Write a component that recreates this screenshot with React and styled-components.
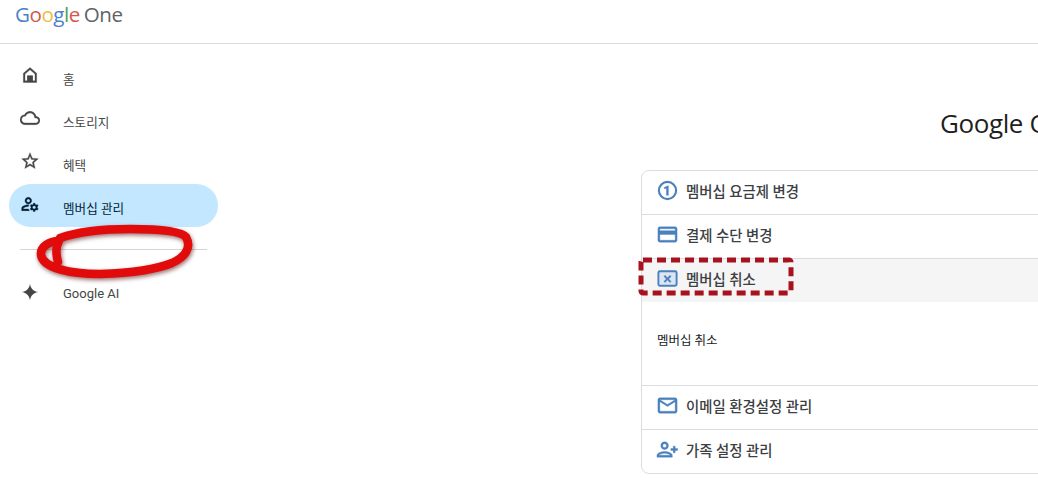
import styled, { createGlobalStyle } from "styled-components";

const GlobalStyle = createGlobalStyle`
  html, body {
    margin: 0;
    height: 100%;
    overflow: hidden;
    background: #fff;
  }
  body {
    font-family: Roboto, "Noto Sans CJK KR", sans-serif;
    color: #444746;
  }
`;

const Page = styled.div`
  width: 1038px;
  height: 487px;
  overflow: hidden;
`;

const Header = styled.header`
  height: 43px;
  border-bottom: 1px solid #dadce0;
  display: flex;
  align-items: flex-start;
  padding-left: 15px;
`;

const Logo = styled.div`
  display: flex;
  gap: 4px;
  font-family: "Open Sans", sans-serif;
  font-size: 20.6px;
  font-weight: 500;
  line-height: 29px;
  letter-spacing: -0.5px;
`;

const Letter = styled.span`
  color: ${(p) => p.$color};
`;

const Content = styled.div`
  display: flex;
`;

const Sidebar = styled.nav`
  position: relative;
  flex: none;
  width: 218px;
  box-sizing: border-box;
  padding: 11px 0 0 9px;
`;

const NavItem = styled.div`
  height: 43px;
  display: flex;
  align-items: center;
  gap: 23px;
  padding-left: 11px;
  border-radius: 22px;
  background: ${(p) => (p.$active ? "#c2e7ff" : "transparent")};
  color: ${(p) => (p.$active ? "#001d35" : "#444746")};
  svg {
    margin-bottom: 3px;
    flex: none;
  }
`;

const NavLabel = styled.span`
  margin-top: ${(p) => (p.$latin ? "0" : "3px")};
  font-size: ${(p) => (p.$latin ? "13px" : "12.6px")};
`;

const Divider = styled.hr`
  border: 0;
  border-top: 1px solid #d5d5d5;
  margin: 22px 0 22px 11px;
  width: 187px;
`;

const Scribble = styled.svg`
  position: absolute;
  left: 30px;
  top: 177px;
  filter: drop-shadow(1px 2px 2px rgba(90, 20, 20, 0.6));
`;

const Main = styled.main`
  flex: none;
  width: 820px;
  padding: 62px 0 0 423px;
`;

const Title = styled.h1`
  margin: 0 0 30px;
  padding-left: 299px;
  font-family: "Open Sans", sans-serif;
  font-size: 26px;
  font-weight: 400;
  line-height: 34px;
  letter-spacing: -0.4px;
  color: #1f1f1f;
  white-space: nowrap;
`;

const Card = styled.section`
  width: 700px;
  border: 1px solid #dadce0;
  border-radius: 8px;
`;

const Row = styled.div`
  position: relative;
  box-sizing: border-box;
  height: ${(p) => (p.$plain ? "43px" : "44px")};
  display: flex;
  align-items: center;
  gap: 7px;
  padding: 0 0 5px 14px;
  background: ${(p) => (p.$open ? "#f5f5f5" : "transparent")};
  border-bottom: ${(p) => (p.$plain ? "none" : "1px solid #dadce0")};
  font-size: 14.4px;
  font-weight: 500;
  color: #3c4043;
`;

const Panel = styled.div`
  height: 84px;
  box-sizing: border-box;
  border-bottom: 1px solid #dadce0;
  padding: 30px 0 0 15px;
  font-size: 12.5px;
  line-height: 18px;
  color: #202124;
`;

const Highlight = styled.svg`
  position: absolute;
  left: -5px;
  top: -3px;
`;

const Glyph = ({ size = 20, color = "currentColor", weight = 0.4, children }) => (
  <svg width={size} height={size} viewBox="0 0 24 24" fill={color} stroke={color} strokeWidth={weight}>
    {children}
  </svg>
);

const navIcons = {
  home: (
    <>
      <path d="M12 5.69l6 5.2V19h-3v-6H9v6H6v-8.11l6-5.2M12 3L4 10v11h16V10L12 3z" />
      <path d="M9 13h6v7H9z" />
    </>
  ),
  cloud: (
    <path d="M12 6c2.62 0 4.88 1.86 5.39 4.43l.3 1.5 1.53.11c1.56.1 2.78 1.41 2.78 2.96 0 1.65-1.35 3-3 3H6c-2.21 0-4-1.79-4-4 0-2.05 1.53-3.76 3.56-3.97l1.07-.11.5-.95C8.08 7.14 9.94 6 12 6m0-2C9.11 4 6.6 5.64 5.35 8.04 2.34 8.36 0 10.91 0 14c0 3.31 2.69 6 6 6h13c2.76 0 5-2.24 5-5 0-2.64-2.05-4.78-4.65-4.96C18.67 6.59 15.64 4 12 4z" />
  ),
  star: (
    <path d="M22 9.24l-7.19-.62L12 2 9.19 8.63 2 9.24l5.46 4.73L5.82 21 12 17.27 18.18 21l-1.63-7.03L22 9.24zM12 15.4l-3.76 2.27 1-4.28-3.32-2.88 4.38-.38L12 6.1l1.71 4.04 4.38.38-3.32 2.88 1 4.28L12 15.4z" />
  ),
  manage: (
    <>
      <path d="M4 18v-.65c0-.34.16-.66.41-.81C6.1 15.53 8.03 15 10 15c.03 0 .05 0 .08.01.1-.7.3-1.37.59-1.98-.22-.02-.44-.03-.67-.03-2.42 0-4.68.67-6.61 1.82-.88.52-1.39 1.5-1.39 2.53V20h9.26c-.42-.6-.75-1.28-.97-2H4z" />
      <path d="M10 12c2.21 0 4-1.79 4-4s-1.79-4-4-4-4 1.79-4 4 1.79 4 4 4zm0-6c1.1 0 2 .9 2 2s-.9 2-2 2-2-.9-2-2 .9-2 2-2z" />
      <path d="M20.75 16c0-.22-.03-.42-.06-.63l1.14-1.01-1-1.73-1.45.49c-.32-.27-.68-.48-1.08-.63L18 11h-2l-.3 1.49c-.4.15-.76.36-1.08.63l-1.45-.49-1 1.73 1.14 1.01c-.03.21-.06.41-.06.63s.03.42.06.63l-1.14 1.01 1 1.73 1.45-.49c.32.27.68.48 1.08.63L16 21h2l.3-1.49c.4-.15.76-.36 1.08-.63l1.45.49 1-1.73-1.14-1.01c.03-.21.06-.41.06-.63zM17 18c-1.1 0-2-.9-2-2s.9-2 2-2 2 .9 2 2-.9 2-2 2z" />
    </>
  ),
  spark: <path d="M12 2c.7 5.6 4.4 9.3 10 10-5.6.7-9.3 4.4-10 10-.7-5.6-4.4-9.3-10-10 5.6-.7 9.3-4.4 10-10z" />,
};

const BLUE = "#4a80bd";

const rowIcons = {
  plan: (
    <>
      <circle cx="12" cy="12" r="9" fill="none" stroke={BLUE} strokeWidth="2.2" />
      <path d="M12.9 17h-2v-7.4l-2.2.7V8.7L12.7 7h.2z" />
    </>
  ),
  payment: (
    <path d="M20 4H4c-1.11 0-1.99.89-1.99 2L2 18c0 1.11.89 2 2 2h16c1.11 0 2-.89 2-2V6c0-1.11-.89-2-2-2zm0 14H4v-6h16v6zm0-10H4V6h16v2z" />
  ),
  cancel: (
    <>
      <rect x="2.5" y="4.5" width="19" height="15" rx="1.5" fill="#dbe6f2" stroke={BLUE} strokeWidth="2" />
      <path d="M9.4 8.6L12 11.2l2.6-2.6 1.2 1.2-2.6 2.6 2.6 2.6-1.2 1.2-2.6-2.6-2.6 2.6-1.2-1.2 2.6-2.6-2.6-2.6z" />
    </>
  ),
  mail: (
    <path d="M22 6c0-1.1-.9-2-2-2H4c-1.1 0-2 .9-2 2v12c0 1.1.9 2 2 2h16c1.1 0 2-.9 2-2V6zm-2 0l-8 5-8-5h16zm0 12H4V8l8 5 8-5v10z" />
  ),
  family: (
    <>
      <path d="M9 12c2.21 0 4-1.79 4-4s-1.79-4-4-4-4 1.79-4 4 1.79 4 4 4zm0-6c1.1 0 2 .9 2 2s-.9 2-2 2-2-.9-2-2 .9-2 2-2z" />
      <path d="M9 14c-2.67 0-8 1.34-8 4v2h16v-2c0-2.66-5.33-4-8-4zm-6 4c.22-.72 3.31-2 6-2 2.7 0 5.8 1.29 6 2H3z" />
      <path d="M20 11V8.5h-2V11h-2.5v2H18v2.5h2V13h2.5v-2z" />
    </>
  ),
};

const navItems = [
  { icon: "home", label: "홈" },
  { icon: "cloud", label: "스토리지" },
  { icon: "star", label: "혜택" },
  { icon: "manage", label: "멤버십 관리", active: true },
];

const logoLetters = [
  ["G", "#4a82c9"],
  ["o", "#d2584c"],
  ["o", "#e8bf3f"],
  ["g", "#4a82c9"],
  ["l", "#4f9e5f"],
  ["e", "#d2584c"],
];

const App = () => (
  <Page>
    <GlobalStyle />
    <Header>
      <Logo>
        <span>
          {logoLetters.map(([ch, color], i) => (
            <Letter key={i} $color={color}>
              {ch}
            </Letter>
          ))}
        </span>
        <Letter $color="#5f6368">One</Letter>
      </Logo>
    </Header>
    <Content>
      <Sidebar>
        {navItems.map((item) => (
          <NavItem key={item.icon} $active={item.active}>
            <Glyph>{navIcons[item.icon]}</Glyph>
            <NavLabel>{item.label}</NavLabel>
          </NavItem>
        ))}
        <Divider />
        <NavItem>
          <Glyph weight={0}>{navIcons.spark}</Glyph>
          <NavLabel $latin>Google AI</NavLabel>
        </NavItem>
        <Scribble width="170" height="60" viewBox="0 0 170 60" fill="none">
          <path
            d="M28 41C26 34 25 27 29 20C19 20 10 26 11 34C13 47 40 53 70 53C100 52 125 49 142 42C155 36 162 27 156 16C150 9 120 8 100 8C75 8 50 10 30 17"
            stroke="#e20b0b"
            strokeWidth="8.5"
            strokeLinecap="round"
            strokeLinejoin="round"
          />
        </Scribble>
      </Sidebar>
      <Main>
        <Title>Google One 멤버십</Title>
        <Card>
          <Row>
            <Glyph size={23} color={BLUE}>{rowIcons.plan}</Glyph>
            멤버십 요금제 변경
          </Row>
          <Row>
            <Glyph size={23} color={BLUE}>{rowIcons.payment}</Glyph>
            결제 수단 변경
          </Row>
          <Row $open $plain>
            <Glyph size={23} color={BLUE}>{rowIcons.cancel}</Glyph>
            멤버십 취소
            <Highlight width="160" height="44" fill="none">
              <rect
                x="4"
                y="4"
                width="150"
                height="33"
                rx="2"
                stroke="#a8121f"
                strokeWidth="5"
                strokeDasharray="9 5"
              />
            </Highlight>
          </Row>
          <Panel>멤버십 취소</Panel>
          <Row>
            <Glyph size={23} color={BLUE}>{rowIcons.mail}</Glyph>
            이메일 환경설정 관리
          </Row>
          <Row $plain>
            <Glyph size={23} color={BLUE}>{rowIcons.family}</Glyph>
            가족 설정 관리
          </Row>
        </Card>
      </Main>
    </Content>
  </Page>
);

export default App;
